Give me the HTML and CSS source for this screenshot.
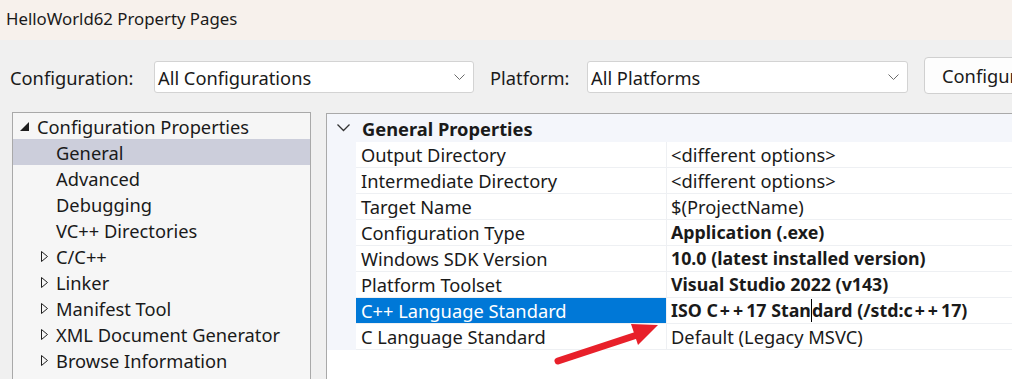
FILE: index.html
```html
<!DOCTYPE html>
<html lang="en">
<head>
  <meta charset="UTF-8" />
  <title>HelloWorld62 Property Pages</title>
  <link rel="stylesheet" href="styles.css">
</head>
<body>
  <div class="titlebar">HelloWorld62 Property Pages</div>

  <div class="toolbar">
    <span class="label label-config">Configuration:</span>
    <div class="combo combo-config">
      <span>All Configurations</span>
      <svg width="11" height="7" viewBox="0 0 11 7"><path d="M0.5 0.5 L5.5 5.5 L10.5 0.5" fill="none" stroke="#6b6b6b" stroke-width="1"/></svg>
    </div>
    <span class="label label-platform">Platform:</span>
    <div class="combo combo-platform">
      <span>All Platforms</span>
      <svg width="11" height="7" viewBox="0 0 11 7"><path d="M0.5 0.5 L5.5 5.5 L10.5 0.5" fill="none" stroke="#6b6b6b" stroke-width="1"/></svg>
    </div>
    <button class="btn">Configuration Manager...</button>
  </div>

  <div class="main">
    <div class="tree">
      <div class="node root">
        <svg class="expanded" width="9" height="9" viewBox="0 0 9 9"><polygon points="9,0 9,9 0,9" fill="#1e1e1e"/></svg>
        <span>Configuration Properties</span>
      </div>
      <div class="node child selected"><span>General</span></div>
      <div class="node child"><span>Advanced</span></div>
      <div class="node child"><span>Debugging</span></div>
      <div class="node child"><span>VC++ Directories</span></div>
      <div class="node child"><svg class="collapsed" width="7" height="11" viewBox="0 0 7 11"><polygon points="0.5,0.5 6.5,5.5 0.5,10.5" fill="none" stroke="#1e1e1e"/></svg><span>C/C++</span></div>
      <div class="node child"><svg class="collapsed" width="7" height="11" viewBox="0 0 7 11"><polygon points="0.5,0.5 6.5,5.5 0.5,10.5" fill="none" stroke="#1e1e1e"/></svg><span>Linker</span></div>
      <div class="node child"><svg class="collapsed" width="7" height="11" viewBox="0 0 7 11"><polygon points="0.5,0.5 6.5,5.5 0.5,10.5" fill="none" stroke="#1e1e1e"/></svg><span>Manifest Tool</span></div>
      <div class="node child"><svg class="collapsed" width="7" height="11" viewBox="0 0 7 11"><polygon points="0.5,0.5 6.5,5.5 0.5,10.5" fill="none" stroke="#1e1e1e"/></svg><span>XML Document Generator</span></div>
      <div class="node child"><svg class="collapsed" width="7" height="11" viewBox="0 0 7 11"><polygon points="0.5,0.5 6.5,5.5 0.5,10.5" fill="none" stroke="#1e1e1e"/></svg><span>Browse Information</span></div>
    </div>

    <div class="grid-panel">
      <div class="group-head">
        <svg width="13" height="8" viewBox="0 0 13 8"><path d="M0.5 0.5 L6.5 6.5 L12.5 0.5" fill="none" stroke="#333" stroke-width="1.3"/></svg>
        <span>General Properties</span>
      </div>
      <div class="props">
        <div class="row"><div class="name">Output Directory</div><div class="value">&lt;different options&gt;</div></div>
        <div class="row"><div class="name">Intermediate Directory</div><div class="value">&lt;different options&gt;</div></div>
        <div class="row"><div class="name">Target Name</div><div class="value">$(ProjectName)</div></div>
        <div class="row"><div class="name">Configuration Type</div><div class="value bold">Application (.exe)</div></div>
        <div class="row"><div class="name">Windows SDK Version</div><div class="value bold">10.0 (latest installed version)</div></div>
        <div class="row"><div class="name">Platform Toolset</div><div class="value bold">Visual Studio 2022 (v143)</div></div>
        <div class="row active"><div class="name">C++ Language Standard</div><div class="value bold">ISO C<span class="plus">++</span>17 Stan<span class="caret"></span>dard (/std:c<span class="plus">++</span>17)</div></div>
        <div class="row"><div class="name">C Language Standard</div><div class="value">Default (Legacy MSVC)</div></div>
      </div>
    </div>
  </div>

  <svg class="arrow" width="1012" height="379" viewBox="0 0 1012 379">
    <line x1="558" y1="361" x2="640" y2="334" stroke="#e8202a" stroke-width="7" stroke-linecap="round"/>
    <polygon points="658,325 631,324 638,345" fill="#e8202a"/>
  </svg>
</body>
</html>
```

FILE: styles.css
```css
body {
  margin: 0;
  width: 1012px;
  height: 379px;
  overflow: hidden;
  background: #f0f0f0;
  font-family: "Noto Sans", "Open Sans", sans-serif;
  font-size: 18.3px;
  color: #1a1a1a;
  position: relative;
}

.titlebar {
  height: 40px;
  line-height: 38px;
  padding-left: 6px;
  background: #f7f1ec;
  font-size: 16.8px;
  color: #1a1a1a;
}

.toolbar {
  height: 72px;
  display: flex;
  align-items: center;
  padding: 2px 0 0 10px;
  white-space: nowrap;
  box-sizing: border-box;
  overflow: hidden;
}

.toolbar > * {
  flex-shrink: 0;
}

.label-config {
  width: 144px;
}

.label-platform {
  width: 97px;
}

.combo {
  height: 32px;
  box-sizing: border-box;
  border: 1px solid #d3d3d3;
  border-radius: 3px;
  background: #fff;
  display: flex;
  align-items: center;
  justify-content: space-between;
  padding: 0 8px 0 3px;
}

.combo-config {
  width: 320px;
  margin-right: 16px;
}

.combo-platform {
  width: 321px;
  margin-right: 16px;
}

/* dialog is wider than the shot, so the button runs off the right edge */
.btn {
  height: 37px;
  margin-top: -4px;
  border: 1px solid #d0d0d0;
  border-radius: 4px;
  background: #fdfdfd;
  font: inherit;
  color: #1a1a1a;
  padding: 0 17px;
  white-space: nowrap;
}

.main {
  display: flex;
  align-items: flex-start;
  padding-left: 12px;
}

.tree {
  width: 299px;
  height: 280px;
  box-sizing: border-box;
  border: 1px solid #a9a9a9;
  border-bottom: none;
  background: #f6f6f6;
  flex-shrink: 0;
}

.node {
  height: 26px;
  display: flex;
  align-items: center;
  white-space: nowrap;
}

.node.root {
  padding-left: 7px;
}

.node.root svg {
  margin-right: 8px;
  margin-top: 1px;
}

.node.child {
  padding-left: 43px;
}

.node.child .collapsed {
  margin-left: -15px;
  margin-right: 8px;
}

.node.selected {
  background: #cccedb;
}

.grid-panel {
  flex: 1;
  margin-left: 15px;
  margin-top: 1px;
  height: 280px;
  border-top: 1px solid #a9a9a9;
  border-left: 1px solid #a9a9a9;
  background: #fff;
}

.group-head {
  height: 28px;
  display: flex;
  align-items: center;
  background: #f4f6fb;
  font-weight: bold;
  padding-left: 10px;
}

.group-head svg {
  margin-right: 12px;
}

.props {
  padding-left: 29px;
  background: #f4f6fb;
}

.row {
  height: 26px;
  display: flex;
  background: #fff;
  box-sizing: border-box;
  border-bottom: 1px solid #eef0f3;
}

.row .name {
  width: 310px;
  padding-left: 5px;
  box-sizing: border-box;
  line-height: 25px;
  white-space: nowrap;
}

.row .value {
  flex: 1;
  border-left: 1px solid #eef0f3;
  padding-left: 4px;
  line-height: 25px;
  white-space: nowrap;
}

.row .value.bold {
  font-weight: bold;
  font-size: 17.8px;
}

.plus {
  letter-spacing: 3px;
  padding-left: 2px;
}

.row.active .name {
  background: #0078d7;
  color: #fff;
}

.caret {
  display: inline-block;
  width: 1px;
  height: 23px;
  background: #000;
  vertical-align: -5px;
}

.arrow {
  position: absolute;
  top: 0;
  left: 0;
  pointer-events: none;
}
```
